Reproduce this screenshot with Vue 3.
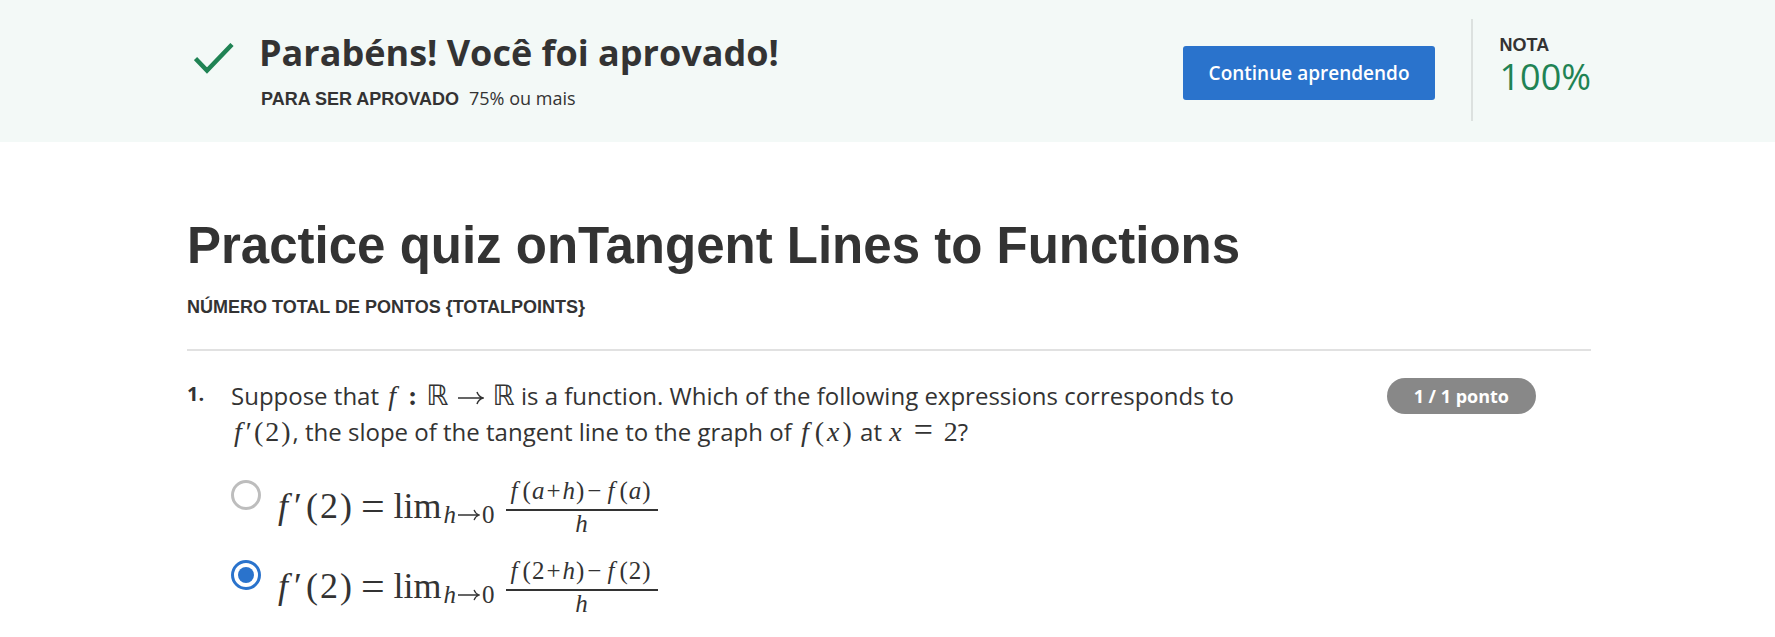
<script setup>
import { ref } from 'vue'

const selected = ref('two')

const options = [
  { id: 'a', point: 'a', italic: true },
  { id: 'two', point: '2', italic: false },
]
</script>

<template>
  <div class="page">
    <header class="banner">
      <svg class="check" viewBox="0 0 40 31" aria-hidden="true">
        <path d="M1.5 15.5 13 27.500 38 1.500" fill="none" stroke="#1f8354" stroke-width="4.500" />
      </svg>
      <div class="result">
        <h2 class="result-title">Parabéns! Você foi aprovado!</h2>
        <p class="result-sub"><span class="caps">PARA SER APROVADO</span><span class="light">75% ou mais</span></p>
      </div>
      <button type="button" class="continue">Continue aprendendo</button>
      <div class="grade">
        <span class="caps">NOTA</span>
        <span class="score">100%</span>
      </div>
    </header>

    <main class="content">
      <h1 class="title">Practice quiz onTangent Lines to Functions</h1>
      <p class="caps total">NÚMERO TOTAL DE PONTOS {TOTALPOINTS}</p>

      <section class="question">
        <span class="number">1.</span>
        <div class="body">
          <p id="prompt" class="prompt">
            Suppose that <span class="math"><i class="f">f</i><b class="colon">:</b><span class="set">ℝ</span><svg class="arrow" viewBox="0 0 26 14" aria-hidden="true"><path d="M0 7H25M19 1C20 4 22 6 25 7C22 8 20 10 19 13" /></svg><span class="set">ℝ</span></span> is a function. Which of the following expressions corresponds to
            <br>
            <span class="math"><i class="f">f</i><span class="prime">′</span><span class="paren">(</span>2<span class="paren">)</span></span>, the slope of the tangent line to the graph of <span class="math"><i class="f">f</i><span class="paren">(</span><i class="var">x</i><span class="paren">)</span></span> at <span class="math"><i class="var">x</i><span class="eq">=</span>2</span>?
          </p>

          <div class="options" role="radiogroup" aria-labelledby="prompt">
            <label v-for="o in options" :key="o.id" class="option">
              <input v-model="selected" type="radio" name="answer" :value="o.id" class="radio">
              <span class="formula">
                <i class="f">f</i><span class="prime">′</span><span class="paren">(</span>2<span class="paren">)</span><span class="eq">=</span>
                <span class="lim">lim</span>
                <span class="sub"><i>h</i><svg class="arrow" viewBox="0 0 26 14" aria-hidden="true"><path d="M0 7H25M19 1C20 4 22 6 25 7C22 8 20 10 19 13" /></svg>0</span>
                <span class="fraction">
                  <span class="numerator"><i class="f">f</i><span class="paren">(</span><span :class="{ italic: o.italic }">{{ o.point }}</span><span class="op">+</span><i>h</i><span class="paren">)</span><span class="op">−</span><i class="f">f</i><span class="paren">(</span><span :class="{ italic: o.italic }">{{ o.point }}</span><span class="paren">)</span></span>
                  <i class="denominator">h</i>
                </span>
              </span>
            </label>
          </div>
        </div>
        <span class="badge">1 / 1 ponto</span>
      </section>
    </main>
  </div>
</template>

<style>
body {
  margin: 0;
  background: #fff;
}
</style>

<style scoped>
.page {
  color: #333;
  font-family: "Open Sans", "Noto Sans", sans-serif;
}

h1,
h2,
p {
  margin: 0;
}

.banner {
  display: flex;
  align-items: flex-start;
  box-sizing: border-box;
  min-height: 142px;
  padding: 19px 184px 21px 194px;
  background: #f3f9f7;
}

.check {
  width: 40px;
  height: 31px;
  margin-top: 24px;
}

.result {
  flex: 1;
  margin-left: 25px;
}

.result-title {
  margin-top: 10px;
  font-size: 36px;
  font-weight: 700;
  line-height: 48px;
}

.result-sub {
  display: flex;
  align-items: baseline;
  gap: 10px;
  margin-top: 9px;
  padding-left: 2px;
  line-height: 24px;
}

.caps {
  font-family: "Liberation Sans", Arial, sans-serif;
  font-size: 18px;
  font-weight: 700;
  line-height: 24px;
}

.light {
  font-size: 18px;
  font-weight: 400;
}

.continue {
  height: 54px;
  margin-top: 27px;
  padding: 0 26px;
  border: 0;
  border-radius: 3px;
  background: #2a73cc;
  color: #fff;
  font: 600 19px/54px "Open Sans", sans-serif;
  cursor: pointer;
}

.grade {
  display: flex;
  flex-direction: column;
  height: 102px;
  box-sizing: border-box;
  margin-left: 36px;
  padding: 14px 0 0 26px;
  border-left: 2px solid #dce1df;
}

.score {
  color: #1f8354;
  font-size: 36px;
  font-weight: 400;
  line-height: 40px;
}

.content {
  padding: 74px 184px 0 187px;
}

.title {
  font-family: "Liberation Sans", Arial, sans-serif;
  font-size: 51px;
  font-weight: 700;
  line-height: 60px;
}

.total {
  margin-top: 19px;
}

.question {
  display: flex;
  align-items: flex-start;
  margin-top: 30px;
  padding: 27px 55px 0 0;
  border-top: 2px solid #e1e1e1;
}

.number {
  width: 44px;
  font-size: 20px;
  font-weight: 700;
  line-height: 32px;
}

.body {
  flex: 1;
}

.prompt {
  font-size: 24px;
  font-weight: 400;
  line-height: 36px;
}

.math,
.formula {
  font-family: "Liberation Serif", "DejaVu Sans", serif;
  font-weight: 400;
  white-space: nowrap;
}

.math {
  font-size: 28px;
  line-height: 28px;
}

.math .f {
  margin: 0 4px 0 3px;
}

.math .paren {
  margin: 0 2px;
}

.math .var {
  margin: 0 1px;
}

.colon {
  margin: 0 9px 0 8px;
}

.arrow {
  fill: none;
  stroke: currentColor;
  stroke-width: 1.500;
}

.math .arrow {
  width: 26px;
  height: 14px;
  margin: 0 9px;
}

.math .eq {
  margin: 0 11px;
  font-size: 34px;
}

.badge {
  padding: 0 27px;
  border-radius: 18px;
  background: #888;
  color: #fff;
  font-size: 18px;
  font-weight: 700;
  line-height: 36px;
}

.options {
  display: grid;
  gap: 8px;
  margin-top: 20px;
}

.option {
  display: flex;
  align-items: flex-start;
}

.radio {
  display: grid;
  place-content: center;
  width: 30px;
  height: 30px;
  margin: 10px 0 0;
  border: 3px solid #bdbdbd;
  border-radius: 50%;
  appearance: none;
}

.radio:checked {
  border-color: #2a73cc;
}

.radio:checked::before {
  width: 16px;
  height: 16px;
  border-radius: 50%;
  background: #2a73cc;
  content: "";
}

.formula {
  display: flex;
  align-items: center;
  height: 72px;
  margin-left: 12px;
  font-size: 36px;
  line-height: 40px;
}

.formula .f {
  margin: 0 6px 0 5px;
}

.formula .prime {
  margin-right: 2px;
}

.formula .paren {
  margin: 0 2px;
}

.formula .eq {
  margin: 0 9px 0 7px;
  font-size: 42px;
}

.sub {
  display: flex;
  align-items: center;
  padding: 18px 0 0 2px;
  font-size: 25px;
  line-height: 28px;
}

.sub .arrow {
  width: 22px;
  height: 12px;
  margin: 0 2px;
}

.fraction {
  display: grid;
  margin-left: 11px;
  padding-top: 2px;
  font-size: 25px;
  line-height: 28px;
  text-align: center;
}

.numerator {
  padding: 0 6px 4px 1px;
  border-bottom: 2px solid #333;
}

.denominator {
  line-height: 26px;
}

.fraction .f {
  margin: 0 4px;
}

.fraction .op {
  margin: 0 2px;
}

.fraction .paren {
  margin: 0 1px;
}

.italic {
  font-style: italic;
}
</style>
